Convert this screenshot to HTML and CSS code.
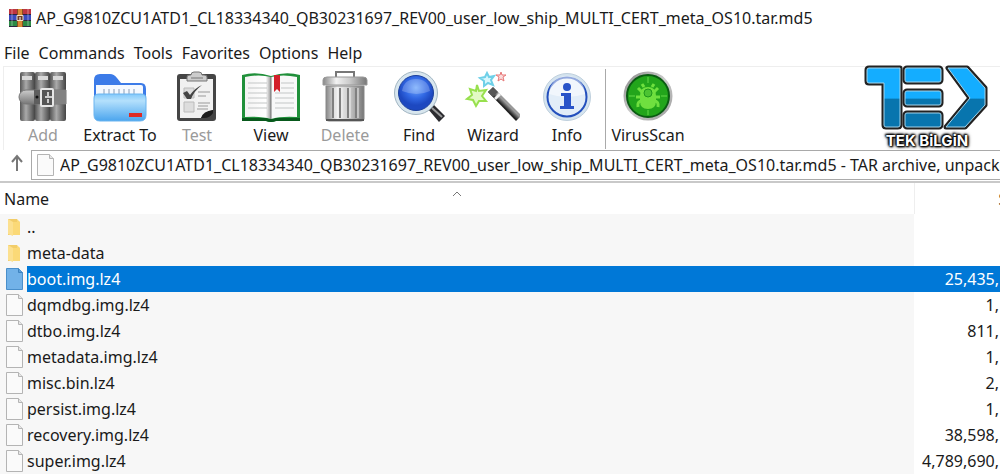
FILE: index.html
```
<!DOCTYPE html>
<html lang="en">

<head>
  <meta charset="UTF-8">
  <meta name="viewport" content="width=device-width, initial-scale=1.0">
  <title>AP_G9810ZCU1ATD1_CL18334340_QB30231697_REV00_user_low_ship_MULTI_CERT_meta_OS10.tar.md5</title>
  <link rel="stylesheet" href="styles.css">
</head>

<body>
  <!-- shared icons -->
  <svg class="sprite" aria-hidden="true">
    <symbol id="file" viewBox="0 0 17 22">
      <path d="M.5.5h12l4 4v17H.5z" fill="#fafafa" stroke="#b4b4b4" />
      <path d="M12.500.5v4h4" fill="#e6e6e6" stroke="#b4b4b4" />
    </symbol>
    <symbol id="folder" viewBox="0 0 14 19">
      <path d="M1 1h9v2l3 1v13H1z" fill="#f2cd69" />
      <path d="M1 1l5 3v14l-5-2z" fill="#fce08f" />
      <path d="M6 4h4V1l3 3v13H6z" fill="#fbd977" />
    </symbol>
  </svg>

  <header class="title-bar">
    <svg class="app-icon" viewBox="0 0 24 20" aria-hidden="true">
      <path d="M1 1h22v6H1z" fill="#bd3440" />
      <path d="M1 7h22v6H1z" fill="#3a4bbd" />
      <path d="M1 13h22v6H1z" fill="#2c8a45" />
      <path d="M1 6h22v1H1zM1 12h22v1H1zM1 18h22v1H1z" fill="#2b2440" />
      <path d="M9 1h6v18H9z" fill="#d98b35" />
      <path d="M9 1h1v18H9zM14 1h1v18h-1z" fill="#8a4d20" />
      <path d="M3 1h2v17H3zM19 1h2v17h-2z" fill="#fff" opacity=".2" />
      <path d="M9 7.500h6v5H9z" fill="#6d3d28" stroke="#f1e1c4" />
      <path d="M12 9v3" stroke="#fff" />
    </svg>
    <h1>AP_G9810ZCU1ATD1_CL18334340_QB30231697_REV00_user_low_ship_MULTI_CERT_meta_OS10.tar.md5</h1>
  </header>

  <nav class="menu">
    <button>File</button>
    <button>Commands</button>
    <button>Tools</button>
    <button>Favorites</button>
    <button>Options</button>
    <button>Help</button>
  </nav>

  <div class="toolbar">
    <button class="tool" disabled>
      <svg viewBox="0 0 50 50" aria-hidden="true">
        <defs>
          <linearGradient id="book">
            <stop offset="0" stop-color="#555" />
            <stop offset=".4" stop-color="#aaa" />
            <stop offset="1" stop-color="#444" />
          </linearGradient>
          <linearGradient id="strap" x2="0" y2="1">
            <stop offset="0" stop-color="#ccc" />
            <stop offset="1" stop-color="#777" />
          </linearGradient>
        </defs>
        <rect x="2" width="15" height="49" rx="2" fill="url(#book)" />
        <rect x="17" width="15" height="49" rx="2" fill="url(#book)" />
        <rect x="32" width="16" height="49" rx="2" fill="url(#book)" />
        <path d="M4 4h10v4H4zM20 4h10v4H20zM35 4h10v4H35z" fill="#d8d8d8" />
        <path d="M8 18h40v14H8a7 7 0 0 1 0-14z" fill="url(#strap)" stroke="#777" />
        <path d="M16 18h8v14h-8z" fill="#5e5e5e" />
        <path d="M35 18h13v14H35z" fill="#828282" />
        <circle cx="19" cy="25" r="1.500" fill="#111" />
        <rect x="23" y="17" width="12" height="17" rx="1" fill="#555" stroke="#e6e6e6" stroke-width="2" />
        <path d="M27 25h7M30 20v4M30 27v4" stroke="#ccc" stroke-width="2" />
      </svg>
      Add
    </button>
    <button class="tool tool-extract">
      <svg class="wide" viewBox="0 0 54 50" aria-hidden="true">
        <defs>
          <linearGradient id="folder-front" x2="0" y2="1">
            <stop offset="0" stop-color="#82c9fb" />
            <stop offset=".25" stop-color="#b4e0fc" />
            <stop offset="1" stop-color="#4ba5ee" />
          </linearGradient>
        </defs>
        <path d="M1 8q0-6 6-6h10q4 0 7 4l4 5h20q5 0 5 6v20H1z" fill="#3c7be8" />
        <path d="M3 13h45q2 0 2 2v21H3z" fill="#f5f9ff" />
        <path d="M11 17v5M16 17v5M21 17v5M26 17v5M31 17v5M36 17v5M41 17v5" stroke="#889db7" />
        <path d="M1 26q0-4 5-4h42q5 0 5 4v17q0 6-6 6H7q-6 0-6-6z" fill="url(#folder-front)" stroke="#6bb4ef" />
        <rect x="36" y="41" width="13" height="4" fill="#df2a24" />
      </svg>
      Extract To
    </button>
    <button class="tool" disabled>
      <svg viewBox="0 0 50 50" aria-hidden="true">
        <rect x="5" y="2" width="39" height="47" rx="3" fill="#454545" />
        <path d="M8 7h33v31q-8 2-12 8H8z" fill="#f1f1f1" />
        <path d="M29 46q2-7 12-8v3q-3 5-9 5z" fill="#1d1d1d" />
        <path d="M15 9V5q0-2 3-2h1q0-3 3-3h5q3 0 3 3h2q3 0 3 2v4z" fill="#ccc" stroke="#777" />
        <path d="M19 6h12" stroke="#777" />
        <path d="M12 16h10v10H12zM12 30h10v10H12z" fill="#ddd" stroke="#bbb" />
        <path d="M11 21l4-2 3 4q5-7 12-10-8 6-11 14h-4z" fill="#444" />
        <path d="M26 20h12M26 24h8M26 31h12M26 34h10M25 37h11" stroke="#999" />
      </svg>
      Test
    </button>
    <button class="tool">
      <svg class="wider" viewBox="0 0 60 50" aria-hidden="true">
        <defs>
          <linearGradient id="page">
            <stop offset="0" stop-color="#f3f3f3" />
            <stop offset=".8" stop-color="#fff" />
            <stop offset="1" stop-color="#999" />
          </linearGradient>
        </defs>
        <path d="M1 3q14-4 29 1 15-5 29-1v46H35q-5 2-10 0H1z" fill="#20903a" />
        <path d="M1 46h24q5 2 10 0h24v3H35q-5 2-10 0H1z" fill="#08591c" />
        <path d="M4 5q14-3 26 0v42q-10-3-26-2z" fill="url(#page)" />
        <path d="M56 5q-14-3-26 0v42q10-3 26-2z" fill="#f8f8f8" />
        <path d="M30 5v42" stroke="#777" />
        <path d="M7 11h19M7 16h19M7 21h19M7 26h19M7 31h19M7 36h19M34 21h19M34 26h19M34 31h19M34 36h19M40 11h13M40 16h13"
          stroke="#c3c6c6" />
        <path d="M33 3h6v17l-3-3-3 3z" fill="#d3202b" />
      </svg>
      View
    </button>
    <button class="tool" disabled>
      <svg viewBox="0 0 50 50" aria-hidden="true">
        <defs>
          <linearGradient id="metal">
            <stop offset="0" stop-color="#888" />
            <stop offset=".3" stop-color="#f2f2f2" />
            <stop offset=".6" stop-color="#ccc" />
            <stop offset="1" stop-color="#777" />
          </linearGradient>
        </defs>
        <path d="M16 5V0h18v5" fill="none" stroke="#777" stroke-width="2" />
        <path d="M6 14h38v33q0 2-3 2H9q-3 0-3-2z" fill="url(#metal)" stroke="#888" />
        <path d="M13 16v30M20 16v30M28 16v30M36 16v30" stroke="#808080" stroke-width="2" />
        <path d="M15 16v30M22 16v30M30 16v30M38 16v30" stroke="#eee" />
        <path d="M3 8q0-3 4-3h36q4 0 4 3v5H3z" fill="url(#metal)" stroke="#999" />
        <path d="M6 48h38" stroke="#555" stroke-width="2" />
      </svg>
      Delete
    </button>
    <button class="tool">
      <svg class="wide" viewBox="0 0 54 50" aria-hidden="true">
        <defs>
          <radialGradient id="lens" cy=".35">
            <stop offset="0" stop-color="#70a8fc" />
            <stop offset=".6" stop-color="#3168e4" />
            <stop offset="1" stop-color="#1d48c0" />
          </radialGradient>
        </defs>
        <path d="M36 37l5-5 12 12-6 6z" fill="#2b2b2f" />
        <path d="M40 36l10 9" stroke="#999" stroke-width="2" />
        <circle cx="24" cy="21" r="21.500" fill="#d8e6ee" stroke="#a1b5c2" />
        <circle cx="24" cy="21" r="17.500" fill="url(#lens)" stroke="#1c409c" />
        <path d="M10 19q2-12 14-12t14 12q-13 6-28 0z" fill="#fff" opacity=".22" />
      </svg>
      Find
    </button>
    <button class="tool">
      <svg class="wide" viewBox="0 0 54 50" aria-hidden="true">
        <defs>
          <linearGradient id="wand" gradientUnits="userSpaceOnUse" x1="40" y1="31" x2="35" y2="36">
            <stop offset="0" stop-color="#999" />
            <stop offset=".6" stop-color="#222" />
          </linearGradient>
        </defs>
        <path d="M22 20l5-5 27 27v3l-4 4z" fill="url(#wand)" />
        <path d="M22 20l5-5 5 5-5 5z" fill="#555" />
        <path d="M28 26l5-5 2 2-5 5z" fill="#eee" />
        <path d="M11 13l2 6 7-1-4 6 4 5-7 0-3 5-3-6-6-1 5-4-2-6 6 2z" fill="#e2fac4" stroke="#98e04e" stroke-width="2" />
        <path d="M21 1l2 4 5-1-3 4 2 5-5-2-4 3 0-5-4-3 5-1z" fill="#d8f7fd" stroke="#6fd0e8" stroke-width="2" />
        <path d="M35 0l1 3h4l-3 2 1 4-3-2-3 2 1-4-3-2h4z" fill="#fbdcdc" stroke="#e77878" />
      </svg>
      Wizard
    </button>
    <button class="tool">
      <svg viewBox="0 0 50 50" aria-hidden="true">
        <circle cx="25" cy="25" r="23.500" fill="#d5e4ef" stroke="#bfd0dd" />
        <circle cx="25" cy="25" r="19.500" fill="#e2edf8" stroke="#2450bd" stroke-width="2" />
        <path d="M7 22a18 18 0 0 1 36 0q-18 6-36 0z" fill="#fff" opacity=".5" />
        <circle cx="25" cy="15" r="4" fill="#2853c8" />
        <path d="M19 21h10v13h3v3H18v-3h4V24h-3z" fill="#2853c8" />
      </svg>
      Info
    </button>
    <span class="separator"></span>
    <button class="tool tool-scan">
      <svg viewBox="0 0 50 50" aria-hidden="true">
        <defs>
          <linearGradient id="rim" x2="1" y2="1">
            <stop offset="0" stop-color="#888" />
            <stop offset=".5" stop-color="#ccc" />
            <stop offset="1" stop-color="#999" />
          </linearGradient>
        </defs>
        <circle cx="25" cy="24" r="24.500" fill="url(#rim)" />
        <circle cx="25" cy="24" r="21" fill="#22a51b" stroke="#0a5c12" stroke-width="2" />
        <path d="M25 5v6M25 38v5M6 24h6M38 24h6" stroke="#65d94a" />
        <path d="M19 20l-4-4M31 20l4-4M18 25h-5M32 25h5M19 29q-5 0-4 6M31 29q5 0 4 6M21 15l-2-3M29 15l2-3" fill="none"
          stroke="#6fe03f" stroke-width="3" />
        <path d="M17 24q0-9 8-9t8 9v5q0 8-8 8t-8-8z" fill="#6fe03f" />
        <circle cx="25" cy="21" r="4" fill="#4cc332" stroke="#1e971c" />
      </svg>
      VirusScan
    </button>
  </div>

  <div class="address">
    <button class="up" aria-label="Up one level">
      <svg viewBox="0 0 12 18" aria-hidden="true">
        <path d="M6 17V2M1 8l5-6 5 6" fill="none" stroke="#777" stroke-width="2" />
      </svg>
    </button>
    <label class="path">
      <svg class="file-icon" aria-hidden="true"><use href="#file" /></svg>
      <input type="text" aria-label="Path" value="AP_G9810ZCU1ATD1_CL18334340_QB30231697_REV00_user_low_ship_MULTI_CERT_meta_OS10.tar.md5 - TAR archive, unpacked size">
    </label>
  </div>

  <main class="list">
    <table>
      <thead>
        <tr>
          <th class="name">Name
            <svg class="sort" viewBox="0 0 10 6" aria-hidden="true">
              <path d="M1 5l4-4 4 4" fill="none" stroke="#777" />
            </svg>
          </th>
          <th class="size">Size</th>
        </tr>
      </thead>
      <tbody>
        <tr>
          <td class="name"><div class="entry"><svg class="folder-icon" aria-hidden="true"><use href="#folder" /></svg><span>..</span></div></td>
          <td class="size"></td>
        </tr>
        <tr>
          <td class="name"><div class="entry"><svg class="folder-icon" aria-hidden="true"><use href="#folder" /></svg><span>meta-data</span></div></td>
          <td class="size"></td>
        </tr>
        <tr class="selected">
          <td class="name">
            <div class="entry">
              <svg class="file-icon" viewBox="0 0 17 22" aria-hidden="true">
                <path d="M.5.5h12l4 4v17H.5z" fill="#72b2e8" stroke="#4a8fca" />
                <path d="M12.500.5v4h4" fill="#5b9fda" stroke="#3e83bf" />
              </svg>
              <span>boot.img.lz4</span>
            </div>
          </td>
          <td class="size">25,435,</td>
        </tr>
        <tr>
          <td class="name"><div class="entry"><svg class="file-icon" aria-hidden="true"><use href="#file" /></svg><span>dqmdbg.img.lz4</span></div></td>
          <td class="size">1,</td>
        </tr>
        <tr>
          <td class="name"><div class="entry"><svg class="file-icon" aria-hidden="true"><use href="#file" /></svg><span>dtbo.img.lz4</span></div></td>
          <td class="size">811,</td>
        </tr>
        <tr>
          <td class="name"><div class="entry"><svg class="file-icon" aria-hidden="true"><use href="#file" /></svg><span>metadata.img.lz4</span></div></td>
          <td class="size">1,</td>
        </tr>
        <tr>
          <td class="name"><div class="entry"><svg class="file-icon" aria-hidden="true"><use href="#file" /></svg><span>misc.bin.lz4</span></div></td>
          <td class="size">2,</td>
        </tr>
        <tr>
          <td class="name"><div class="entry"><svg class="file-icon" aria-hidden="true"><use href="#file" /></svg><span>persist.img.lz4</span></div></td>
          <td class="size">1,</td>
        </tr>
        <tr>
          <td class="name"><div class="entry"><svg class="file-icon" aria-hidden="true"><use href="#file" /></svg><span>recovery.img.lz4</span></div></td>
          <td class="size">38,598,</td>
        </tr>
        <tr>
          <td class="name"><div class="entry"><svg class="file-icon" aria-hidden="true"><use href="#file" /></svg><span>super.img.lz4</span></div></td>
          <td class="size">4,789,690,</td>
        </tr>
      </tbody>
    </table>
  </main>

  <!-- watermark -->
  <div class="logo">
    <svg viewBox="0 0 126 66" aria-hidden="true">
      <defs>
        <linearGradient id="blue" gradientUnits="userSpaceOnUse" x1="0" y1="0" x2="0" y2="66">
          <stop offset="0" stop-color="#14adff" />
          <stop offset=".5" stop-color="#14adff" />
          <stop offset=".52" stop-color="#0875ae" />
          <stop offset="1" stop-color="#0875ae" />
        </linearGradient>
        <g id="mark">
          <path d="M5 3h31v57q0 2-2 2H22q-2 0-2-2V18H5q-2 0-2-2V5q0-2 2-2z" />
          <rect x="41" y="3" width="36" height="14" rx="2" />
          <rect x="41" y="26" width="36" height="14" rx="2" />
          <rect x="41" y="48" width="36" height="14" rx="2" />
          <path d="M84 3h19l18 20v17L101 62H82l24-29z" />
        </g>
      </defs>
      <use href="#mark" fill="#222" stroke="#222" stroke-width="5" stroke-linejoin="round" />
      <use href="#mark" fill="url(#blue)" stroke="#a3d5ec" />
    </svg>
    <span>TEK BiLGiN</span>
  </div>
</body>

</html>
```
FILE: styles.css
```
* {
  box-sizing: border-box;
}

body {
  position: relative;
  margin: 0;
  min-height: 100vh;
  overflow: hidden;
  background: #fff;
  color: #1a1a1a;
  font: 16px/26px "Noto Sans", "Open Sans", sans-serif;
}

button,
input {
  margin: 0;
  padding: 0;
  border: 0;
  background: none;
  color: inherit;
  font: inherit;
}

.sprite {
  position: absolute;
  width: 0;
  height: 0;
}

.title-bar {
  display: flex;
  align-items: center;
  gap: 4px;
  height: 36px;
  padding-left: 8px;
}

.title-bar h1 {
  margin: 0;
  font-size: 16px;
  font-weight: 400;
  white-space: nowrap;
}

.app-icon {
  width: 24px;
  height: 20px;
}

.menu {
  display: flex;
  gap: 9px;
  height: 30px;
  padding: 4px 4px 0;
}

.toolbar {
  display: flex;
  height: 84px;
  margin-left: 3px;
  padding-left: 2px;
  border: 1px solid #eee;
  border-width: 1px 0 0 1px;
}

.tool {
  display: flex;
  flex-direction: column;
  align-items: center;
  width: 74px;
  padding-top: 5px;
  white-space: nowrap;
}

.tool svg {
  width: 50px;
  height: 50px;
  overflow: visible;
}

.tool svg.wide {
  width: 54px;
}

.tool svg.wider {
  width: 60px;
}

.tool:disabled {
  color: #9a9a9a;
}

.tool-extract {
  width: 80px;
}

.tool-scan {
  width: 82px;
}

.separator {
  width: 1px;
  height: 80px;
  margin: 2px 1px 0;
  background: #aaa;
}

.address {
  display: flex;
  height: 33px;
  padding-left: 3px;
  border-bottom: 2px solid #c9c9c9;
}

.up {
  width: 28px;
}

.up svg {
  width: 12px;
  height: 18px;
}

.path {
  display: flex;
  flex: 1;
  align-items: center;
  gap: 6px;
  height: 30px;
  padding-left: 5px;
  border: 1px solid #a9a9a9;
  border-right: 0;
}

.path input {
  flex: 1;
  min-width: 0;
  outline: 0;
}

.file-icon {
  flex: none;
  width: 17px;
  height: 22px;
}

.folder-icon {
  flex: none;
  width: 14px;
  height: 19px;
  margin: 0 2px 0 1px;
}

.list {
  overflow: hidden;
}

/* the size column runs past the right edge of the window */
table {
  width: calc(100% + 32px);
  table-layout: fixed;
  border-collapse: collapse;
}

th {
  height: 31px;
  font-weight: 400;
}

td {
  height: 26px;
  padding: 0;
}

th.name {
  position: relative;
  padding: 0 0 0 4px;
  border-right: 1px solid #eee;
  text-align: left;
}

.sort {
  position: absolute;
  top: 8px;
  left: calc(50% - 5px);
  width: 10px;
  height: 6px;
}

.size {
  width: 118px;
  padding: 0 33px 0 0;
  text-align: right;
}

th.size {
  padding: 0 4px 0 0;
}

td.name {
  background: #f7f7f7;
}

.entry {
  display: flex;
  align-items: center;
  height: 26px;
  padding-left: 6px;
}

.entry span {
  flex: 1;
  margin-left: 4px;
}

.selected .entry span,
.selected .size {
  background: #0078d7;
  color: #fff;
}

.logo {
  position: absolute;
  top: 65px;
  right: 10px;
  width: 126px;
  text-align: center;
}

.logo svg {
  display: block;
  width: 126px;
  height: 66px;
  overflow: visible;
}

.logo span {
  display: block;
  color: #fff;
  font: 700 15px/20px Inter, sans-serif;
  text-shadow: 0 0 2px #000, 0 0 2px #000, 0 0 3px #000, 1px 1px 2px #000, -1px -1px 2px #000, 0 0 4px #000;
}
```
